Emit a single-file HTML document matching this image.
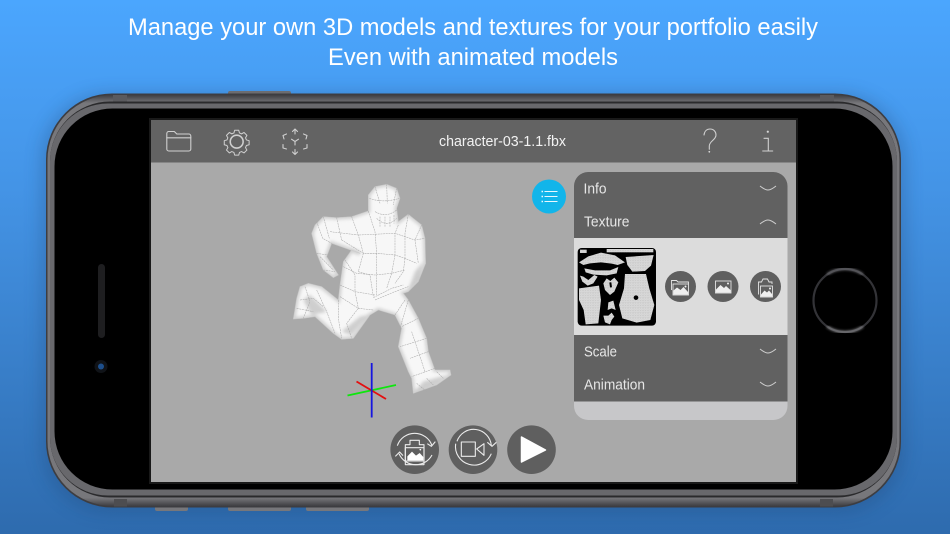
<!DOCTYPE html>
<html><head><meta charset="utf-8"><style>
html,body{margin:0;padding:0;width:950px;height:534px;overflow:hidden;background:#3a80c8}
svg{display:block}
text{font-family:"Liberation Sans",sans-serif}
</style></head><body>
<svg width="950" height="534" viewBox="0 0 950 534" xmlns="http://www.w3.org/2000/svg">
<defs>
<linearGradient id="bg" x1="0" y1="0" x2="0" y2="1"><stop offset="0" stop-color="#4ba6fe"/><stop offset="0.35" stop-color="#4494e6"/><stop offset="1" stop-color="#2e6bae"/></linearGradient>
<linearGradient id="band" x1="0" y1="0" x2="0" y2="1"><stop offset="0" stop-color="#3f3f43"/><stop offset="0.02" stop-color="#77777b"/><stop offset="0.98" stop-color="#77777b"/><stop offset="1" stop-color="#3f3f43"/></linearGradient>
<pattern id="dots" width="5" height="5" patternUnits="userSpaceOnUse"><rect width="5" height="5" fill="#dcdcdc"/><circle cx="1.500" cy="1.500" r=".8" fill="#8c8c8c"/><circle cx="4" cy="3.500" r=".6" fill="#9c9c9c"/></pattern>
<filter id="sh" x="-10%" y="-10%" width="120%" height="120%"><feGaussianBlur stdDeviation="9"/></filter>
<filter id="b1"><feGaussianBlur stdDeviation="0.8"/></filter>
<filter id="b0"><feGaussianBlur stdDeviation="0.6"/></filter>
<filter id="b3"><feGaussianBlur stdDeviation="5"/></filter>
<filter id="bh"><feGaussianBlur stdDeviation="1.200"/></filter>
<clipPath id="silc"><path d="M265 60L285 35L320 28L350 40L360 70L350 100L355 140L385 118L425 150L435 190L437 265L415 320L385 350L370 355L385 375L415 430L440 490L445 530L465 585L510 585L513 600L470 630L400 655L395 610L385 590L355 515L365 460L345 420L295 405L270 420L220 490L185 493L160 475L105 425L70 430L40 432L50 370L60 335L85 325L125 335L175 375L180 330L190 260L215 225L240 235L155 205L140 245L175 300L160 308L130 285L110 235L95 175L105 150L130 125L170 128L215 125L265 108z"/></clipPath>
</defs>
<rect width="950" height="534" fill="url(#bg)"/>
<rect x="42" y="94" width="863" height="418" rx="66" fill="#1b3f6c" opacity=".3" filter="url(#sh)"/>

<text x="473" y="35" text-anchor="middle" font-size="24" fill="#fff" textLength="690" lengthAdjust="spacingAndGlyphs">Manage your own 3D models and textures for your portfolio easily</text>
<text x="473" y="65" text-anchor="middle" font-size="24" fill="#fff" textLength="290" lengthAdjust="spacingAndGlyphs">Even with animated models</text>

<!-- side buttons -->
<rect x="228" y="91" width="63" height="5" rx="2" fill="#6c6c70"/>
<rect x="155" y="506" width="33" height="5" rx="2" fill="#77777b"/>
<rect x="228" y="506" width="63" height="5" rx="2" fill="#77777b"/>
<rect x="306" y="506" width="63" height="5" rx="2" fill="#77777b"/>

<!-- phone -->
<rect x="46" y="93.500" width="855" height="414" rx="66" fill="#3d3d41"/>
<rect x="47.500" y="95" width="852" height="411" rx="65" fill="url(#band)"/>
<rect x="50" y="101.500" width="847" height="396" rx="60" fill="#2a2a2c"/>
<rect x="50" y="103.500" width="847" height="392" rx="58" fill="#68686c"/>
<rect x="54.500" y="108.500" width="838" height="381" rx="58" fill="#000"/>
<rect x="113" y="95" width="14" height="6.500" fill="#5a5a5e"/>
<rect x="820" y="95" width="14" height="6.500" fill="#5a5a5e"/>
<rect x="114" y="499" width="13" height="7.500" fill="#4d4d50"/>
<rect x="820" y="499" width="13" height="7.500" fill="#4d4d50"/>

<rect x="98" y="264" width="7" height="74" rx="3.500" fill="#1e1e20"/>
<circle cx="101" cy="366.500" r="6.500" fill="#101318"/>
<circle cx="101" cy="366.500" r="3" fill="#1d4f8c"/>
<circle cx="845" cy="300.500" r="31.500" fill="none" stroke="#333337" stroke-width="2.200"/>
<path d="M827 274.500A31.500 31.500 0 0 1 863 274.500" fill="none" stroke="#6a6a6f" stroke-width="2.200" filter="url(#bh)"/>
<path d="M827 326.500A31.500 31.500 0 0 0 863 326.500" fill="none" stroke="#8a8a8e" stroke-width="2.200" filter="url(#bh)"/>

<!-- screen -->
<rect x="149" y="118" width="649" height="366" fill="#191919"/>
<rect x="151" y="120" width="645" height="362" fill="#a9a9a9"/>
<rect x="151" y="120" width="645" height="42.500" fill="#636363"/>

<!-- toolbar icons -->
<g fill="none" stroke="#d0d0d0" stroke-width="1.100" stroke-linejoin="round" stroke-linecap="round">
<path d="M166.800 149V133.500a2 2 0 0 1 2-2h5.500l2.500 2.500h12a2 2 0 0 1 2 2V149a2 2 0 0 1-2 2h-20a2 2 0 0 1-2-2z"/>
<path d="M166.800 137.800h24"/>
<g transform="translate(236.700,141.600) scale(.92) translate(-236.700,-141.300)">
<path d="M234.500 129h4.400l.8 2.900 2.300 1 2.700-1.500 3.100 3.100-1.500 2.700 1 2.300 2.900.8v4.400l-2.900.8-1 2.300 1.500 2.700-3.100 3.100-2.700-1.500-2.300 1-.8 2.900h-4.400l-.8-2.900-2.300-1-2.700 1.500-3.100-3.100 1.500-2.700-1-2.300-2.900-.8v-4.400l2.900-.8 1-2.300-1.500-2.700 3.100-3.100 2.700 1.500 2.300-1z"/>
<circle cx="236.700" cy="141.300" r="7" stroke-width="1.700"/>
</g>
<path d="M295 129v5M292.500 131.500l2.500-2.500 2.500 2.500M295 154.500v-5M292.500 152l2.500 2.500 2.500-2.500"/>
<path d="M295 145v-3.500l-3.500-2.300M295 141.500l3.500-2.300"/>
<path d="M283 135.500l3.500-1.500M283 135.500l1 3.500M307 135.500l-3.500-1.500M307 135.500l-1 3.500M283 148l3.500 1M283 148l0-3.500M307 148l-3.500 1M307 148l0-3.500"/>
</g>
<text x="502.500" y="146" text-anchor="middle" font-size="14.500" fill="#f2f2f2" textLength="127" lengthAdjust="spacingAndGlyphs">character-03-1.1.fbx</text>
<g fill="none" stroke="#d0d0d0" stroke-width="1.100" stroke-linecap="round">
<path d="M704 135C704.500 131 707 129 710 129C714 129 716 132 716 135C716 140 709.300 141 709.300 146V149.300"/>
<path d="M764 138.300h4.300V151M762.700 151h10"/>
</g>
<circle cx="709.300" cy="151.800" r=".9" fill="#d8d8d8"/>
<circle cx="767.800" cy="131.700" r="1.100" fill="#d8d8d8"/>

<!-- list button -->
<circle cx="549" cy="196.500" r="17" fill="#12b5ea"/>
<g stroke="#e8f8ff" stroke-width="1">
<path d="M544.500 191.500h13M544.500 196.500h13M544.500 201.500h13"/>
<path d="M541.500 191.500h1.500M541.500 196.500h1.500M541.500 201.500h1.500" stroke-width="1.400"/>
</g>

<!-- panel -->
<rect x="574" y="172" width="213.500" height="248" rx="14" fill="#c7c7c9"/>
<path d="M574 238V186a14 14 0 0 1 14-14h185.500a14 14 0 0 1 14 14v52z" fill="#616161"/>
<rect x="574" y="238" width="213.500" height="97" fill="#dcdcdc"/>
<rect x="574" y="335" width="213.500" height="66.500" fill="#616161"/>
<g font-size="14.500" fill="#e6e6e6">
<text x="583.500" y="193.500" textLength="23" lengthAdjust="spacingAndGlyphs">Info</text>
<text x="584" y="226.500" textLength="45.500" lengthAdjust="spacingAndGlyphs">Texture</text>
<text x="584" y="356.500" textLength="33" lengthAdjust="spacingAndGlyphs">Scale</text>
<text x="584" y="389.500" textLength="61" lengthAdjust="spacingAndGlyphs">Animation</text>
</g>
<g fill="none" stroke="#cfcfcf" stroke-width="1">
<path d="M760 186Q765 190 768 190Q771 190 776 186"/>
<path d="M760 224Q765 220 768 220Q771 220 776 224"/>
<path d="M760 349Q765 353 768 353Q771 353 776 349"/>
<path d="M760 382Q765 386 768 386Q771 386 776 382"/>
</g>

<!-- texture thumb -->
<g transform="translate(575,245) scale(.3333)">
<rect x="8" y="9" width="235" height="233" rx="12" fill="#000"/>
<g fill="url(#dots)" filter="url(#b1)">
<rect x="15" y="14" width="20" height="10"/>
<rect x="95" y="12" width="140" height="10"/>
<path d="M12 52L40 34L78 23L120 31L150 52L128 60L110 56L78 52L45 55L25 60z"/>
<path d="M28 70L60 76L105 76L130 66L125 85L95 91L55 89L32 82z"/>
<path d="M152 36L236 30L228 62L210 78L172 80L157 60z"/>
<path d="M15 92L25 95L40 105L58 90L68 95L55 115L38 122L22 110z"/>
<path d="M85 115L95 100L106 108L118 98L130 112L118 140L105 150L90 135z"/>
<path d="M12 130L72 122L78 165L70 235L32 238L26 195L12 165z"/>
<path d="M100 172L115 167L122 195L110 190L98 195z"/>
<path d="M85 212L100 212L110 203L118 215L110 225L105 238L90 232z"/>
<path d="M150 87L213 87L223 130L238 180L226 225L185 233L142 220L132 180L147 130z"/>
</g>
<circle cx="183" cy="158" r="7" fill="#000"/>
<path d="M106 112L108 127" stroke="#000" stroke-width="6"/>
</g>

<!-- small buttons -->
<g fill="#5f5f5f"><circle cx="680.500" cy="286.500" r="15.500"/><circle cx="723" cy="286.500" r="15.500"/><circle cx="765.500" cy="286.500" r="15.500"/></g>
<g fill="none" stroke="#e4e4e4" stroke-width=".9">
<path d="M671.500 290v-9.500h5l1.500 1.500h10.500v2"/>
<rect x="673" y="284" width="15.500" height="11"/>
<rect x="715.500" y="281" width="15.500" height="12"/>
<path d="M758.500 294.500v-12.500h3l1.500-3h4.500l1.500 3h3v2"/>
<rect x="760.500" y="286" width="12" height="11"/>
</g>
<g fill="#efefef">
<path d="M673.500 294.500v-4l3.500-3 3.500 2.500 3-3 4.500 5v2.500z"/>
<circle cx="685.500" cy="286.500" r="1"/>
<path d="M716 292.500v-3l4.500-4.500 3.500 3 2-2 4.500 4v2.500z"/>
<circle cx="728" cy="283.500" r="1"/>
<path d="M761 296.500v-2l3.500-4 2.500 2 2-2 3 3.500v2.500z"/>
<circle cx="770" cy="288.500" r="1"/>
</g>

<!-- character -->
<g transform="translate(280,175) scale(.3333)">
<path d="M265 60L285 35L320 28L350 40L360 70L350 100L355 140L385 118L425 150L435 190L437 265L415 320L385 350L370 355L385 375L415 430L440 490L445 530L465 585L510 585L513 600L470 630L400 655L395 610L385 590L355 515L365 460L345 420L295 405L270 420L220 490L185 493L160 475L105 425L70 430L40 432L50 370L60 335L85 325L125 335L175 375L180 330L190 260L215 225L240 235L155 205L140 245L175 300L160 308L130 285L110 235L95 175L105 150L130 125L170 128L215 125L265 108z" fill="#f7f7f7" stroke="#c2c2c2" stroke-width="2" stroke-linejoin="round"/>
<g clip-path="url(#silc)">
<path d="M265 60L285 35L320 28L350 40L360 70L350 100L355 140L385 118L425 150L435 190L437 265L415 320L385 350L370 355L385 375L415 430L440 490L445 530L465 585L510 585L513 600L470 630L400 655L395 610L385 590L355 515L365 460L345 420L295 405L270 420L220 490L185 493L160 475L105 425L70 430L40 432L50 370L60 335L85 325L125 335L175 375L180 330L190 260L215 225L240 235L155 205L140 245L175 300L160 308L130 285L110 235L95 175L105 150L130 125L170 128L215 125L265 108z" fill="none" stroke="#cfcfcf" stroke-width="12" filter="url(#b3)"/>
<g fill="#a6a6a6" opacity=".5" filter="url(#b3)">
<path d="M185 470L215 480L265 420L240 425z"/>
<path d="M70 375L95 420L140 410L90 360z"/>
<path d="M405 650L470 625L500 600L430 620z"/>
<path d="M385 345L415 315L430 260L405 290z"/>
</g>
</g>
<g fill="none" stroke="#a8a8a8" stroke-width="1.600" stroke-linejoin="round" stroke-dasharray="6 2" filter="url(#b0)">
<path d="M268 70Q310 85 358 70M285 35L300 85M320 28L322 85M350 40L340 90"/>
<path d="M285 110Q320 130 350 105M290 130Q320 160 350 130M300 125v30M315 125v32M330 125v30M342 120v26"/>
<path d="M110 140L128 190L155 205M130 125L148 190M170 128L185 195M215 125L235 180L250 235M265 108L285 170L290 235M355 150L345 175L345 240M385 118L375 175L375 250M425 150L405 195L415 265"/>
<path d="M150 170L235 180L345 175L405 195L435 190M185 195L250 235L290 235L345 240L375 250L410 265"/>
<path d="M195 255L225 300L225 350L235 400M250 235L235 290L270 300L280 365M290 235L290 300L290 360M345 240L335 295L320 340M375 250L370 290L345 325"/>
<path d="M190 275L230 295L285 300L335 295L375 285M180 330L225 350L285 360M180 365L235 400L280 405"/>
<path d="M110 235L145 240M120 245L160 285M130 285L165 290"/>
<path d="M280 368L335 340L370 330M285 375L345 350L385 335"/>
<path d="M175 375L175 430L185 490M235 400L200 445L215 490M110 345L140 410L165 475M60 375L100 370L130 395M75 335L90 380L70 430M50 400L100 410"/>
<path d="M345 420L375 375M385 375L360 460M415 430L365 455M440 490L360 515M395 470L410 515L435 590M445 530L390 550M465 580L395 605"/>
<path d="M410 625L440 650M440 610L460 630M470 590L490 610"/>
</g>
</g>

<!-- axes -->
<g stroke-width="1.800" fill="none">
<path d="M347.500 395.500L396 385" stroke="#0ee60e"/>
<path d="M356.500 381.500L386 399" stroke="#e40f0f"/>
<path d="M371.700 363v54.500" stroke="#1616e0"/>
</g>

<!-- bottom buttons -->
<g fill="#5f5f5f"><circle cx="414.700" cy="449.700" r="24.300"/><circle cx="473" cy="449.700" r="24.300"/><circle cx="531.500" cy="449.700" r="24.300"/></g>
<g transform="translate(388,423) scale(.3333)" fill="none" stroke="#ececec" stroke-width="3.300" stroke-linejoin="round">
<path d="M28 68A55 55 0 0 1 132 68"/>
<path d="M118 62L130 70L142 56"/>
<path d="M132 96A55 55 0 0 1 33 92"/>
<path d="M22 100L35 87L45 98"/>
<path d="M52 125V65H66V52H94V65H108V125z"/>
<rect x="52" y="74" width="56" height="40"/>
<path d="M207 55A53 53 0 0 1 310 68"/>
<path d="M298 58L312 70L325 58"/>
<path d="M310 92A56 56 0 0 1 203 62"/>
<rect x="220" y="57" width="42" height="43"/>
<path d="M266 78L288 62V97z"/>
<path d="M58 112V100L72 86L84 98L95 90L106 102V112z" fill="#fff" stroke="none"/>
<circle cx="97" cy="80" r="2.500" fill="#fff" stroke="none"/>
</g>
<path d="M521.500 437L545.500 450L521.500 462z" fill="#fff" stroke="#fff" stroke-width="1.500" stroke-linejoin="round"/>
</svg>
</body></html>
